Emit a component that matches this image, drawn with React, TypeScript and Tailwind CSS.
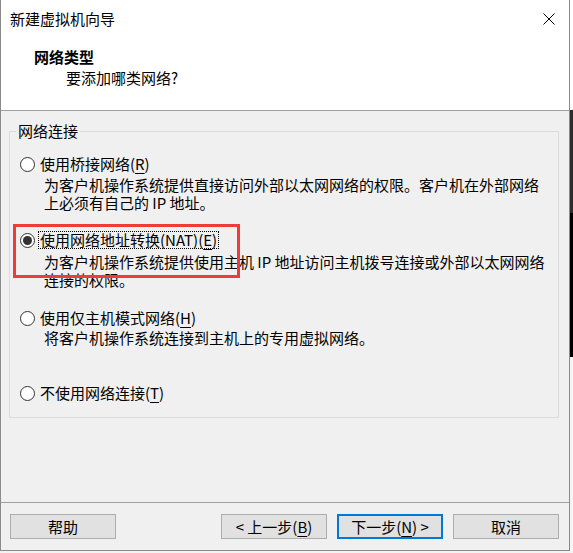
import React from "react";

const U = ({ c }: { c: string }) => (
  <span className="underline underline-offset-[3px] decoration-1">{c}</span>
);

function Radio({ checked }: { checked?: boolean }) {
  return (
    <span className="ml-[10px] mr-[3px] w-[15px] h-[15px] rounded-full border border-[#333333] bg-white flex items-center justify-center shrink-0">
      {checked && <span className="w-[9px] h-[9px] rounded-full bg-[#333333]" />}
    </span>
  );
}

function Btn({ children, primary }: { children: React.ReactNode; primary?: boolean }) {
  return (
    <div
      className={
        "w-[106px] h-[25px] bg-[#e1e1e1] flex items-center justify-center leading-[18px] whitespace-nowrap " +
        (primary ? "border-2 border-[#0078d7]" : "border border-[#adadad]")
      }
    >
      {children}
    </div>
  );
}

export default function App() {
  return (
    <div className="relative w-[573px] h-[553px] flex bg-white text-black text-[15px] font-['Microsoft_YaHei_UI','Noto_Sans_CJK_SC',sans-serif] overflow-hidden">
      <div className="flex flex-col w-[570px]">
        <div className="w-[570px] h-[551px] flex flex-col border-l border-r border-b border-[#8a8a8a] bg-[#f0f0f0]">
          {/* header */}
          <div className="h-[111px] bg-white border-b border-[#a0a0a0] flex flex-col">
            <div className="mt-[9px] h-[20px] flex items-center justify-between">
              <span className="ml-[9px] leading-[20px]">新建虚拟机向导</span>
              <svg className="mr-[14px]" width="12" height="12" viewBox="0 0 12 12">
                <path d="M0.5 0.5 L11.5 11.5 M11.5 0.5 L0.5 11.5" stroke="#000" strokeWidth="1" />
              </svg>
            </div>
            <div className="mt-[18px] ml-[33px] leading-[20px] font-bold">网络类型</div>
            <div className="mt-[1px] ml-[65px] leading-[20px]">要添加哪类网络?</div>
          </div>
          {/* body */}
          <div className="h-[391px] flex flex-col">
            <fieldset className="mt-[11px] ml-[8px] w-[550px] h-[296px] border border-[#dcdcdc] p-0 m-0 min-w-0">
              <legend className="ml-[6px] px-[2px] leading-[18px]">网络连接</legend>
              <div className="flex flex-col">
                <div className="mt-[15px] h-[18px] flex items-center">
                  <Radio />
                  <span className="px-[1px] border border-transparent leading-[16px] whitespace-nowrap">
                    使用桥接网络(<U c="R" />)
                  </span>
                </div>
                <div className="mt-[3px] ml-[34px] leading-[18px] whitespace-nowrap">
                  为客户机操作系统提供直接访问外部以太网网络的权限。客户机在外部网络
                  <br />
                  上必须有自己的 IP 地址。
                </div>
                <div className="mt-[19px] h-[18px] flex items-center">
                  <Radio checked />
                  <span className="px-[1px] border border-dotted border-black leading-[16px] whitespace-nowrap">
                    使用网络地址转换(NAT)(<U c="E" />)
                  </span>
                </div>
                <div className="mt-[4px] ml-[34px] leading-[18px] whitespace-nowrap">
                  为客户机操作系统提供使用主机 IP 地址访问主机拨号连接或外部以太网网络
                  <br />
                  连接的权限。
                </div>
                <div className="mt-[20px] h-[18px] flex items-center">
                  <Radio />
                  <span className="px-[1px] border border-transparent leading-[16px] whitespace-nowrap">
                    使用仅主机模式网络(<U c="H" />)
                  </span>
                </div>
                <div className="mt-[2px] ml-[34px] leading-[18px] whitespace-nowrap">
                  将客户机操作系统连接到主机上的专用虚拟网络。
                </div>
                <div className="mt-[37px] h-[18px] flex items-center">
                  <Radio />
                  <span className="px-[1px] border border-transparent leading-[16px] whitespace-nowrap">
                    不使用网络连接(<U c="T" />)
                  </span>
                </div>
              </div>
            </fieldset>
          </div>
          {/* footer */}
          <div className="h-[48px] border-t border-[#a0a0a0] flex items-start pt-[11px]">
            <div className="ml-[9px]">
              <Btn>帮助</Btn>
            </div>
            <div className="flex-1" />
            <Btn>
              &lt; 上一步(<U c="B" />)
            </Btn>
            <div className="ml-[10px]">
              <Btn primary>
                下一步(<U c="N" />) &gt;
              </Btn>
            </div>
            <div className="ml-[10px] mr-[10px]">
              <Btn>取消</Btn>
            </div>
          </div>
        </div>
        <div className="h-[2px] bg-[#f3f3f3]" />
      </div>
      <div className="w-[3px] flex flex-col">
        <div className="h-[110px] bg-white" />
        <div className="h-[103px] bg-[#2d2d2d]" />
        <div className="h-[144px] bg-black" />
        <div className="flex-1 bg-[#f5f5f5]" />
      </div>
      <div className="absolute left-[13px] top-[224px] w-[227px] h-[54px] border-[3px] border-[#ee3b3b] pointer-events-none" />
    </div>
  );
}
